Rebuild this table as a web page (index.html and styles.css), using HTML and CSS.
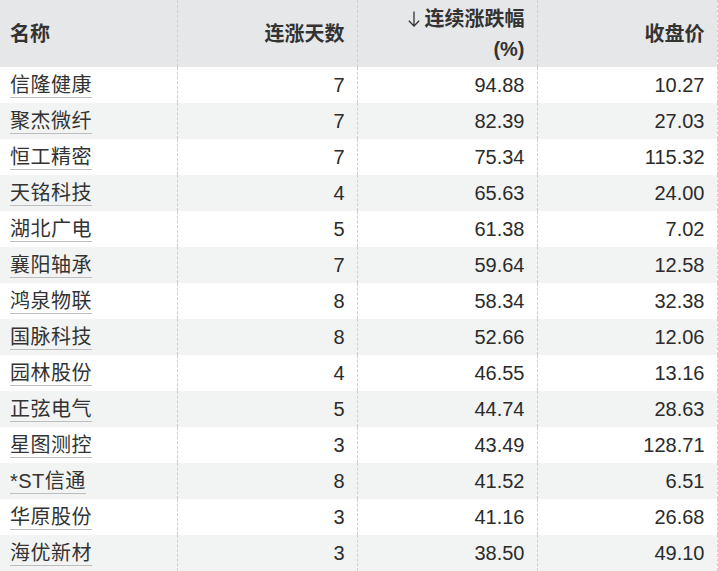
FILE: index.html
```html
<!DOCTYPE html>
<html lang="zh">
<head>
<meta charset="utf-8">
<link rel="stylesheet" href="styles.css">
</head>
<body>
<table class="tbl">
  <colgroup>
    <col class="c1"><col class="c2"><col class="c3"><col class="c4">
  </colgroup>
  <thead>
    <tr>
      <th class="left">名称</th>
      <th>连涨天数</th>
      <th><svg class="arrow" width="12" height="16" viewBox="0 0 12 16"><path d="M6 0.5 V15 M0.8 9.8 L6 15 L11.2 9.8" fill="none" stroke="#333" stroke-width="1.3"/></svg>连续涨跌幅<br>(%)</th>
      <th>收盘价</th>
    </tr>
  </thead>
  <tbody>
    <tr><td class="left"><a class="name">信隆健康</a></td><td>7</td><td>94.88</td><td>10.27</td></tr>
    <tr><td class="left"><a class="name">聚杰微纤</a></td><td>7</td><td>82.39</td><td>27.03</td></tr>
    <tr><td class="left"><a class="name">恒工精密</a></td><td>7</td><td>75.34</td><td>115.32</td></tr>
    <tr><td class="left"><a class="name">天铭科技</a></td><td>4</td><td>65.63</td><td>24.00</td></tr>
    <tr><td class="left"><a class="name">湖北广电</a></td><td>5</td><td>61.38</td><td>7.02</td></tr>
    <tr><td class="left"><a class="name">襄阳轴承</a></td><td>7</td><td>59.64</td><td>12.58</td></tr>
    <tr><td class="left"><a class="name">鸿泉物联</a></td><td>8</td><td>58.34</td><td>32.38</td></tr>
    <tr><td class="left"><a class="name">国脉科技</a></td><td>8</td><td>52.66</td><td>12.06</td></tr>
    <tr><td class="left"><a class="name">园林股份</a></td><td>4</td><td>46.55</td><td>13.16</td></tr>
    <tr><td class="left"><a class="name">正弦电气</a></td><td>5</td><td>44.74</td><td>28.63</td></tr>
    <tr><td class="left"><a class="name">星图测控</a></td><td>3</td><td>43.49</td><td>128.71</td></tr>
    <tr><td class="left"><a class="name">*ST信通</a></td><td>8</td><td>41.52</td><td>6.51</td></tr>
    <tr><td class="left"><a class="name">华原股份</a></td><td>3</td><td>41.16</td><td>26.68</td></tr>
    <tr><td class="left"><a class="name">海优新材</a></td><td>3</td><td>38.50</td><td>49.10</td></tr>
  </tbody>
</table>
</body>
</html>
```
FILE: styles.css
```css
html, body {
  margin: 0;
  padding: 0;
  background: #ffffff;
}
body {
  font-family: "Liberation Sans", Arial, "Noto Sans CJK SC", sans-serif;
  font-size: 20px;
  color: #333333;
}
.tbl {
  border-collapse: collapse;
  table-layout: fixed;
  width: 717px;
  border-right: 1px dashed #cfcfcf;
}
.c1 { width: 177px; }
.c2 { width: 180px; }
.c3 { width: 180px; }
.c4 { width: 180px; }
.tbl th,
.tbl td {
  padding: 3px 12px 3px 10px;
  line-height: 30px;
  text-align: right;
  border-left: 1px dashed #cfcfcf;
  white-space: nowrap;
}
.tbl th:first-child,
.tbl td:first-child {
  border-left: none;
}
.tbl th {
  background: #e6e7e9;
  font-weight: bold;
  color: #333333;
  vertical-align: middle;
  height: 60px;
  padding-top: 4px;
  padding-bottom: 3px;
}
.tbl td {
  height: 30px;
  color: #2b2b2b;
}
.tbl .left {
  text-align: left;
}
.tbl tbody tr:nth-child(even) td {
  background: #f2f3f3;
}
.arrow {
  display: inline-block;
  vertical-align: -1px;
  margin-right: 5px;
}
.name {
  color: #333333;
  text-decoration: none;
  border-bottom: 1px solid #bdbdbd;
  padding-bottom: 1px;
  letter-spacing: 0.5px;
}
```
